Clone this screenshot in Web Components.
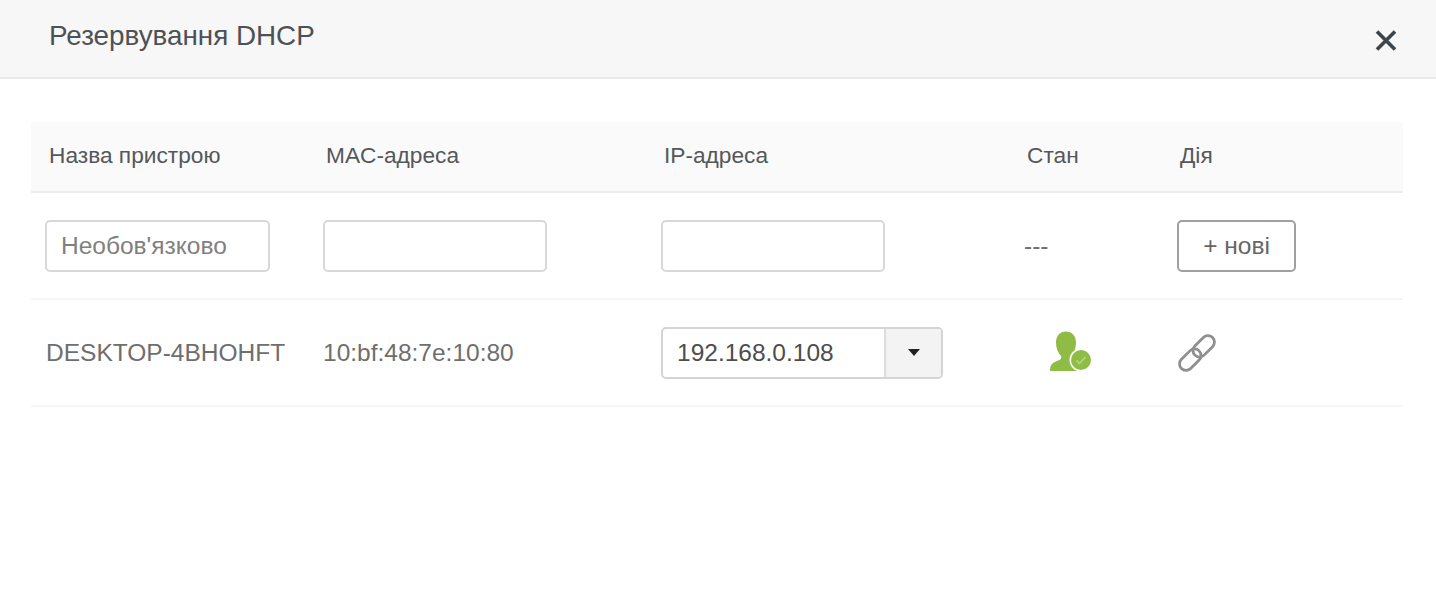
<!DOCTYPE html>
<html lang="uk">
<head>
<meta charset="utf-8">
<title>Резервування DHCP</title>
<style>
  html, body { margin: 0; height: 100%; background: #fff; font-family: "Liberation Sans", Arial, sans-serif; }
</style>
</head>
<body>
<dhcp-dialog title-text="Резервування DHCP">
  <dhcp-table>
    <dhcp-row kind="head">
      <span>Назва пристрою</span><span>MAC-адреса</span><span>IP-адреса</span><span>Стан</span><span>Дія</span>
    </dhcp-row>
    <dhcp-row>
      <text-box placeholder="Необов'язково"></text-box>
      <text-box></text-box>
      <text-box></text-box>
      <span>---</span>
      <add-button>+ нові</add-button>
    </dhcp-row>
    <dhcp-row>
      <span>DESKTOP-4BHOHFT</span>
      <span>10:bf:48:7e:10:80</span>
      <ip-select value="192.168.0.108"></ip-select>
      <status-icon></status-icon>
      <link-icon></link-icon>
    </dhcp-row>
  </dhcp-table>
</dhcp-dialog>

<script>
class dhcpDialog extends HTMLElement {
  constructor () {
    super();
    const shadow = this.attachShadow({mode: 'open'});
    shadow.innerHTML = `
    <style>
      :host { display: block; color: #4a4a4a; }
      header {
        display: flex;
        justify-content: space-between;
        height: 77px;
        padding: 0 38px 0 49px;
        background: #f7f7f7;
        border-bottom: 2px solid #e9e9e9;
      }
      h1 { margin: 19px 0 0; font-size: 27.8px; line-height: 34px; font-weight: 400; color: #4d5156; }
      svg { display: block; margin-top: 28px; }
      main { padding: 43px 33px 0 31px; }
    </style>
    <header>
      <h1>${this.getAttribute("title-text") || ""}</h1>
      <svg width="24" height="24" viewBox="0 0 24 24"><path d="M3 3.5L21 21.5M21 3.5L3 21.5" fill="none" stroke="#3c444c" stroke-width="3.6"/></svg>
    </header>
    <main><slot></slot></main>
    `;
  }
}
customElements.define("dhcp-dialog", dhcpDialog);

class dhcpTable extends HTMLElement {
  constructor () {
    super();
    const shadow = this.attachShadow({mode: 'open'});
    shadow.innerHTML = `
    <style>:host { display: block; }</style>
    <slot></slot>
    `;
  }
}
customElements.define("dhcp-table", dhcpTable);

class dhcpRow extends HTMLElement {
  constructor () {
    super();
    const shadow = this.attachShadow({mode: 'open'});
    shadow.innerHTML = `
    <style>
      :host {
        display: grid;
        grid-template-columns: 278px 338px 363px 153px 1fr;
        align-items: center;
        height: 105px;
        padding-left: 14px;
        border-bottom: 2px solid #f5f5f5;
        font-size: 24.5px;
        color: #6e6e6e;
      }
      :host(:not([kind="head"])) ::slotted(span:first-child) { padding-left: 1px; }
      :host([kind="head"]) {
        grid-template-columns: 277px 338px 363px 153px 1fr;
        height: 67px;
        padding: 0 0 2px 18px;
        background: #fafafa;
        border-bottom-color: #ececec;
        font-size: 22.7px;
        color: #55575a;
      }
    </style>
    <slot></slot>
    `;
  }
}
customElements.define("dhcp-row", dhcpRow);

class textBox extends HTMLElement {
  constructor () {
    super();
    const shadow = this.attachShadow({mode: 'open'});
    shadow.innerHTML = `
    <style>
      :host {
        display: flex;
        align-items: center;
        box-sizing: border-box;
        width: 224px;
        height: 52px;
        padding: 0 14px;
        border: 2px solid #d8d8d8;
        border-radius: 5px;
        background: #fff;
        color: #808080;
      }
      :host([placeholder]) { width: 225px; }
    </style>
    <span>${this.getAttribute("placeholder") || ""}</span>
    `;
  }
}
customElements.define("text-box", textBox);

class ipSelect extends HTMLElement {
  constructor () {
    super();
    const shadow = this.attachShadow({mode: 'open'});
    shadow.innerHTML = `
    <style>
      :host {
        display: flex;
        box-sizing: border-box;
        width: 282px;
        height: 52px;
        border: 2px solid #d4d4d4;
        border-radius: 5px;
        background: #fff;
        color: #4d4d4d;
      }
      .val { flex: 1; display: flex; align-items: center; padding-left: 14px; border-right: 2px solid #dcdcdc; }
      .btn { width: 55px; display: flex; align-items: center; justify-content: center; background: #f3f3f3; border-radius: 0 3px 3px 0; }
      .btn i { border: 6.5px solid transparent; border-top: 7px solid #222; border-bottom: 0; }
    </style>
    <div class="val">${this.getAttribute("value") || ""}</div>
    <div class="btn"><i></i></div>
    `;
  }
}
customElements.define("ip-select", ipSelect);

class addButton extends HTMLElement {
  constructor () {
    super();
    const shadow = this.attachShadow({mode: 'open'});
    shadow.innerHTML = `
    <style>
      :host {
        display: flex;
        align-items: center;
        justify-content: center;
        box-sizing: border-box;
        width: 119px;
        height: 52px;
        border: 2px solid #a0a0a0;
        border-radius: 5px;
        background: #fff;
        color: #666;
      }
    </style>
    <slot></slot>
    `;
  }
}
customElements.define("add-button", addButton);

class statusIcon extends HTMLElement {
  constructor () {
    super();
    const shadow = this.attachShadow({mode: 'open'});
    shadow.innerHTML = `
    <style>
      :host { display: block; }
      svg { display: block; margin-left: 25px; }
    </style>
    <svg width="44" height="44" viewBox="0 0 44 44">
      <path d="M1 40C1 34 3 32 8 30C11 29 13 28 12 25C9 22 7 17 7 11.5C7 5 11 0.5 17 0.5C23 0.5 27 5 27 11.5C27 17 25 22 23 25C22 28 24 29 28 30C32 32 34 35 34 40Z" fill="#8fbc45"/>
      <circle cx="32" cy="29" r="11.5" fill="#fff"/>
      <circle cx="32" cy="29" r="10" fill="#8fbc45"/>
      <path d="M27.5 29.5L30.5 32.5L36.5 26" fill="none" stroke="#b4d481" stroke-width="1.8"/>
    </svg>
    `;
  }
}
customElements.define("status-icon", statusIcon);

class linkIcon extends HTMLElement {
  constructor () {
    super();
    const shadow = this.attachShadow({mode: 'open'});
    shadow.innerHTML = `
    <style>
      :host { display: block; }
      svg { display: block; margin-left: 0; }
    </style>
    <svg width="40" height="40" viewBox="0 0 40 40">
      <g transform="rotate(45 20 20)" fill="none" stroke="#8f8f8f" stroke-width="2.8">
        <rect x="13.5" y="-2" width="13" height="25" rx="6.5"/>
        <rect x="13.5" y="17" width="13" height="25" rx="6.5"/>
      </g>
    </svg>
    `;
  }
}
customElements.define("link-icon", linkIcon);
</script>
</body>
</html>
